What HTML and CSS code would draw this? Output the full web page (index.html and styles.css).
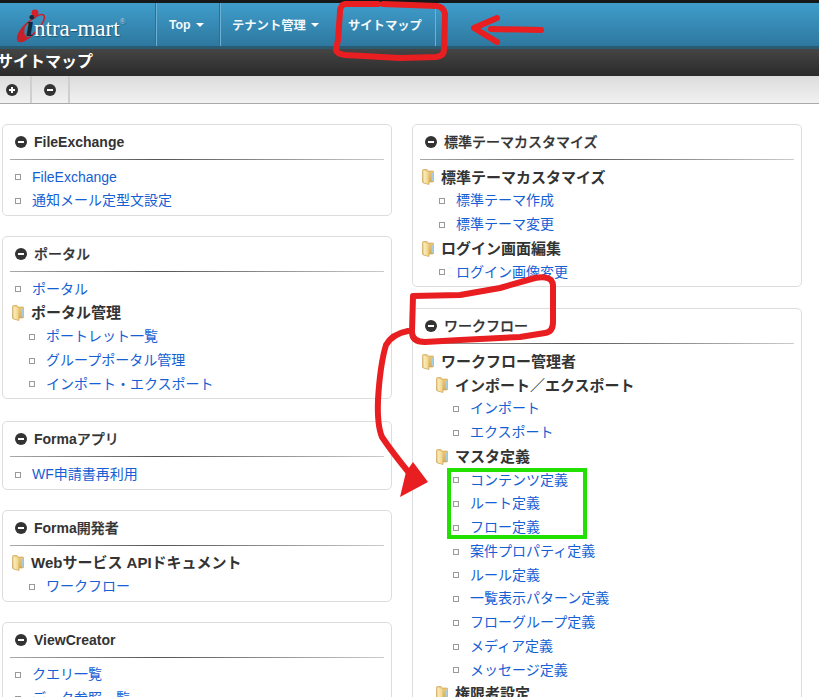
FILE: index.html
```html
<!DOCTYPE html>
<html lang="ja">
<head>
    <meta charset="UTF-8">
    <title>サイトマップ</title>
    <link rel="stylesheet" href="styles.css">
</head>
<body>
<svg class="defs" width="0" height="0">
    <defs>
        <linearGradient id="folderBack" x1="0" y1="0" x2="0" y2="1">
            <stop offset="0" stop-color="#eccb80"/>
            <stop offset="1" stop-color="#d3a655"/>
        </linearGradient>
        <linearGradient id="folderFront" x1="0" y1="0" x2="1" y2="0">
            <stop offset="0" stop-color="#fbeebd"/>
            <stop offset="1" stop-color="#efd48a"/>
        </linearGradient>
        <symbol id="folder" viewBox="0 0 12 16">
            <path d="M0.5 1.5 Q0.5 0.5 1.5 0.5 H5 L6 2 H11 Q11.5 2 11.5 3 V12 Q11.5 13 10.5 13 H7 V15.5 L1.5 14 Q0.5 13.7 0.5 13 Z" fill="url(#folderBack)" stroke="#c9a052" stroke-width="0.6"/>
            <path d="M1.5 1.5 L6.5 3 V15 L1.5 13.5 Z" fill="url(#folderFront)"/>
            <rect x="9.8" y="4" width="1.2" height="8" fill="#a8cfe0"/>
        </symbol>
    </defs>
</svg>

<header class="navbar">
    <div class="logo">
        <svg class="logo-mark" width="60" height="46" viewBox="0 0 60 46">
            <ellipse cx="31" cy="28" rx="6" ry="18" transform="rotate(45 31 28)" fill="none" stroke="#c8202a" stroke-width="1.6"/>
            <path d="M26 23 Q15 34 18 40 Q22 43 31 37 Q21 39 26 23 Z" fill="#c8202a"/>
            <circle cx="35" cy="13" r="3.4" fill="#d8202a"/>
        </svg>
        <span class="logo-text"><span class="logo-i">i</span>ntra-mart<sup class="logo-r">®</sup></span>
    </div>
    <nav class="nav-items">
        <a class="nav-item nav-top">Top<span class="caret"></span></a>
        <a class="nav-item nav-tenant">テナント管理<span class="caret"></span></a>
        <a class="nav-item nav-map">サイトマップ</a>
    </nav>
</header>

<div class="titlebar">サイトマップ</div>

<div class="toolbar">
    <button class="tool-btn"><span class="round-icon plus"></span></button>
    <button class="tool-btn"><span class="round-icon minus"></span></button>
</div>

<main class="columns">
    <div class="column">
        <section class="panel">
            <h3 class="panel-head"><span class="round-icon minus"></span><b>FileExchange</b></h3>
            <ul class="tree">
                <li class="leaf"><a>FileExchange</a></li>
                <li class="leaf"><a>通知メール定型文設定</a></li>
            </ul>
        </section>

        <section class="panel panel-wide-gap">
            <h3 class="panel-head"><span class="round-icon minus"></span><span class="panel-title">ポータル</span></h3>
            <ul class="tree">
                <li class="leaf"><a>ポータル</a></li>
                <li class="branch">
                    <div class="folder-row"><svg class="folder"><use href="#folder"/></svg>ポータル管理</div>
                    <ul>
                        <li class="leaf"><a>ポートレット一覧</a></li>
                        <li class="leaf"><a>グループポータル管理</a></li>
                        <li class="leaf"><a>インポート・エクスポート</a></li>
                    </ul>
                </li>
            </ul>
        </section>

        <section class="panel">
            <h3 class="panel-head"><span class="round-icon minus"></span><span class="panel-title"><b>Forma</b>アプリ</span></h3>
            <ul class="tree">
                <li class="leaf"><a>WF申請書再利用</a></li>
            </ul>
        </section>

        <section class="panel">
            <h3 class="panel-head"><span class="round-icon minus"></span><span class="panel-title"><b>Forma</b>開発者</span></h3>
            <ul class="tree">
                <li class="branch">
                    <div class="folder-row"><svg class="folder"><use href="#folder"/></svg>Webサービス APIドキュメント</div>
                    <ul>
                        <li class="leaf"><a>ワークフロー</a></li>
                    </ul>
                </li>
            </ul>
        </section>

        <section class="panel">
            <h3 class="panel-head"><span class="round-icon minus"></span><b>ViewCreator</b></h3>
            <ul class="tree">
                <li class="leaf"><a>クエリ一覧</a></li>
                <li class="leaf"><a>データ参照一覧</a></li>
            </ul>
        </section>
    </div>

    <div class="column">
        <section class="panel panel-mid-gap">
            <h3 class="panel-head"><span class="round-icon minus"></span><span class="panel-title">標準テーマカスタマイズ</span></h3>
            <ul class="tree">
                <li class="branch">
                    <div class="folder-row"><svg class="folder"><use href="#folder"/></svg>標準テーマカスタマイズ</div>
                    <ul>
                        <li class="leaf"><a>標準テーマ作成</a></li>
                        <li class="leaf"><a>標準テーマ変更</a></li>
                    </ul>
                </li>
                <li class="branch">
                    <div class="folder-row"><svg class="folder"><use href="#folder"/></svg>ログイン画面編集</div>
                    <ul>
                        <li class="leaf"><a>ログイン画像変更</a></li>
                    </ul>
                </li>
            </ul>
        </section>

        <section class="panel">
            <h3 class="panel-head"><span class="round-icon minus"></span><span class="panel-title">ワークフロー</span></h3>
            <ul class="tree">
                <li class="branch">
                    <div class="folder-row"><svg class="folder"><use href="#folder"/></svg>ワークフロー管理者</div>
                    <ul>
                        <li class="branch">
                            <div class="folder-row"><svg class="folder"><use href="#folder"/></svg>インポート／エクスポート</div>
                            <ul>
                                <li class="leaf"><a>インポート</a></li>
                                <li class="leaf"><a>エクスポート</a></li>
                            </ul>
                        </li>
                        <li class="branch">
                            <div class="folder-row"><svg class="folder"><use href="#folder"/></svg>マスタ定義</div>
                            <ul>
                                <li class="leaf"><a>コンテンツ定義</a></li>
                                <li class="leaf"><a>ルート定義</a></li>
                                <li class="leaf"><a>フロー定義</a></li>
                                <li class="leaf"><a>案件プロパティ定義</a></li>
                                <li class="leaf"><a>ルール定義</a></li>
                                <li class="leaf"><a>一覧表示パターン定義</a></li>
                                <li class="leaf"><a>フローグループ定義</a></li>
                                <li class="leaf"><a>メディア定義</a></li>
                                <li class="leaf"><a>メッセージ定義</a></li>
                            </ul>
                        </li>
                        <li class="branch">
                            <div class="folder-row"><svg class="folder"><use href="#folder"/></svg>権限者設定</div>
                        </li>
                    </ul>
                </li>
            </ul>
        </section>
    </div>
</main>

<!-- hand drawn marks on top of the screenshot -->
<svg class="marks" width="819" height="697" viewBox="0 0 819 697">
    <g fill="none" stroke="#e81e20" stroke-linecap="round" stroke-linejoin="round">
        <path stroke-width="6" d="M378 4 L345 4 Q340 5 340 12 L338 40 L336 50 Q337 54 345 55 L400 58 L436 57 Q444 56 444 50 L445 14 Q444 7 437 6 L383 4"/>
        <path stroke-width="6" d="M497 18 L474 28 L497 42 M491 29 L541 30"/>
        <path stroke-width="6" d="M413 296 L460 295 L500 288 L535 278 Q552 275 553 285 L553 322 Q553 332 545 333 L520 337 L460 340 L425 342 Q412 342 412 332 Z"/>
        <path stroke-width="6" d="M408 331 Q392 334 386 345 Q380 365 378 400 Q377 425 382 437 Q392 452 410 474"/>
    </g>
    <path d="M413 462 L428 482 L400 497 L406 472 Z" fill="#e81e20"/>
    <rect x="449" y="470" width="136" height="67" fill="none" stroke="#22e000" stroke-width="4"/>
</svg>
</body>
</html>
```

FILE: styles.css
```css
html, body {
    height: 100%;
    overflow: hidden;
}

body {
    margin: 0;
    background: #fff;
    color: #333;
    font-family: "Liberation Sans", "Noto Sans CJK JP", sans-serif;
    font-size: 14px;
}

.defs {
    display: block;
    height: 0;
}

/* top bar */
.navbar {
    display: flex;
    height: 43px;
    border-top: 3px solid #16181a;
    border-bottom: 3px solid #2b5b72;
    background: linear-gradient(#3f9dcb, #2e789f);
    color: #fff;
}

.logo {
    position: relative;
    width: 156px;
    flex: none;
}

.logo-text {
    position: relative;
    display: block;
    padding: 12px 0 0 20px;
    font-family: "Liberation Serif", serif;
    font-size: 23px;
    line-height: 28px;
    color: #fff;
    text-shadow: 1px 1px 1px #1c5472;
}

.logo-i {
    display: inline-block;
    width: 14px;
    text-align: right;
    font-size: 30px;
    line-height: 0;
    font-style: italic;
    font-weight: bold;
    color: #10283a;
    text-shadow: none;
}

.logo-r {
    font-size: 8px;
    line-height: 0;
    vertical-align: 12px;
    color: #cde;
}

.logo-mark {
    position: absolute;
    left: 0;
    top: -3px;
}

.nav-items {
    display: flex;
}

.nav-item {
    display: flex;
    align-items: center;
    border-left: 1px solid #6fb1d2;
    box-shadow: -1px 0 0 #2c6f94;
    font-size: 12.3px;
    font-weight: bold;
    color: #f4f9fc;
}

.nav-top {
    width: 51px;
    padding-left: 12px;
}

.nav-tenant {
    width: 102px;
    padding-left: 11px;
}

.nav-map {
    width: 87px;
    padding-left: 13px;
    border-right: 1px solid #6fb1d2;
    border-left-color: transparent;
    box-shadow: none;
}

.caret {
    margin-left: 5px;
    border-top: 4px solid #fff;
    border-left: 4px solid transparent;
    border-right: 4px solid transparent;
}

/* page title */
.titlebar {
    height: 27px;
    text-indent: -3px;
    background: linear-gradient(#454545, #2a2a2a);
    color: #fff;
    font-size: 16px;
    font-weight: bold;
    line-height: 25px;
}

.toolbar {
    display: flex;
    height: 27px;
    border-bottom: 1px solid #aaa;
    background: linear-gradient(#dcdcdc, #f1f1f1);
}

.tool-btn {
    display: flex;
    align-items: center;
    justify-content: center;
    width: 38px;
    padding: 0;
    border: none;
    border-right: 2px solid #cfcfcf;
    background: none;
}

.tool-btn:first-child {
    width: 32px;
    padding-right: 6px;
}

.round-icon {
    position: relative;
    flex: none;
    display: inline-block;
    width: 12px;
    height: 12px;
    border-radius: 50%;
    background: #333;
}

.round-icon::before,
.plus::after {
    content: "";
    position: absolute;
    left: 3px;
    top: 5px;
    width: 6px;
    height: 2px;
    background: #fff;
}

.plus::after {
    left: 5px;
    top: 3px;
    width: 2px;
    height: 6px;
}

/* panels */
.columns {
    display: flex;
    gap: 20px;
    padding: 20px 0 0 2px;
}

.column {
    width: 390px;
    flex: none;
}

.panel {
    margin-bottom: 20px;
    padding-bottom: 2px;
    border: 1px solid #ddd;
    border-radius: 5px;
    background: #fff;
}

.panel-mid-gap {
    margin-bottom: 21px;
}

.panel-wide-gap {
    margin-bottom: 22px;
}

.panel-head {
    display: flex;
    align-items: center;
    gap: 7px;
    height: 34px;
    margin: 0 7px;
    padding-left: 5px;
    border-bottom: 1px solid;
    border-image: linear-gradient(90deg, #aaa, #555 40%, #ccc) 1;
    font-size: 14px;
    font-weight: 500;
    color: #333;
}

.panel-title {
    margin-bottom: 2px;
    -webkit-text-stroke: 0.25px #333;
}

.panel-head b {
    -webkit-text-stroke: 0;
}

.tree,
.tree ul {
    margin: 0;
    padding: 0;
    list-style: none;
}

.tree {
    padding: 5.5px 0 0 12px;
}

.tree ul {
    padding-left: 14px;
}

.leaf {
    display: flex;
    align-items: center;
    gap: 11px;
    line-height: 23.75px;
}

.leaf::before {
    content: "";
    flex: none;
    width: 4px;
    height: 4px;
    border: 1px solid #999;
}

.leaf a {
    color: #1560d4;
}

.folder-row {
    display: flex;
    align-items: center;
    gap: 7px;
    margin-left: -3px;
    font-size: 15px;
    font-weight: bold;
    line-height: 23.75px;
}

.folder {
    flex: none;
    width: 12px;
    height: 16px;
}

/* annotation layer */
.marks {
    position: absolute;
    left: 0;
    top: 0;
    pointer-events: none;
}
```
